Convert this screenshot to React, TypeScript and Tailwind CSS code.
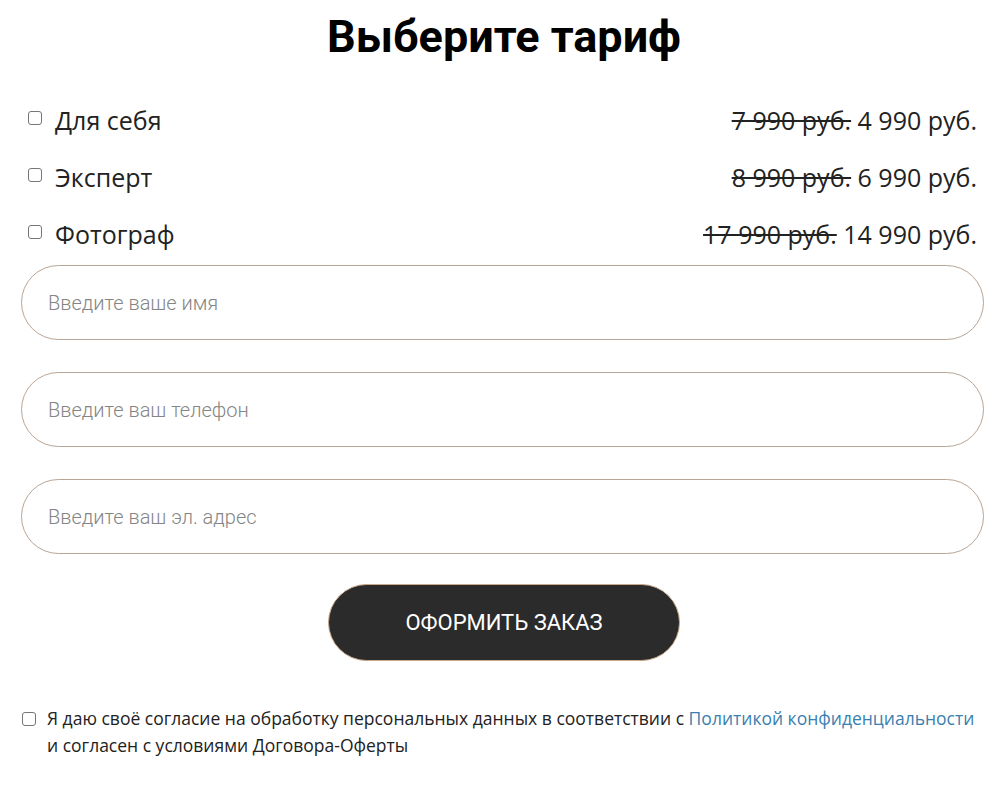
import React from "react";

const tariffs = [
  { name: "Для себя", old: "7 990 руб.", price: "4 990 руб." },
  { name: "Эксперт", old: "8 990 руб.", price: "6 990 руб." },
  { name: "Фотограф", old: "17 990 руб.", price: "14 990 руб." },
];

const placeholders = [
  "Введите ваше имя",
  "Введите ваш телефон",
  "Введите ваш эл. адрес",
];

export default function App() {
  return (
    <div className="w-[1008px] min-h-[785px] bg-white text-black">
      <h1
        className="pt-[10px] text-center text-[45px] font-bold leading-[54px] text-black"
        style={{ fontFamily: "Roboto, sans-serif" }}
      >
        Выберите тариф
      </h1>
      <div
        className="mt-[39px] flex flex-col pl-[28px] pr-[31px]"
        style={{ fontFamily: '"Open Sans", sans-serif' }}
      >
        {tariffs.map((t) => (
          <div key={t.name} className="flex h-[57px] items-start justify-between">
            <label className="flex items-center text-[25px] leading-[34px] text-[#222]">
              <span className="mr-[13px] inline-block h-[14px] w-[14px] -translate-y-[2px] rounded-[3px] border border-[#767676] bg-white" />
              {t.name}
            </label>
            <div className="text-[25px] leading-[34px] text-[#222]">
              <span className="line-through">{t.old}</span> {t.price}
            </div>
          </div>
        ))}
      </div>
      <div className="mt-[-9px] flex flex-col gap-[32px] pl-[21px] pr-[24px]">
        {placeholders.map((p) => (
          <div
            key={p}
            className="flex h-[75px] items-center rounded-full border border-[#b8a596] pl-[26px] text-[20px] font-light text-[#858585]"
            style={{ fontFamily: "Roboto, sans-serif" }}
          >
            {p}
          </div>
        ))}
      </div>
      <div className="mt-[30px] flex justify-center">
        <button
          className="flex h-[77px] w-[352px] items-center justify-center rounded-full border border-[#c9a98b] bg-[#2b2b2b] text-[22px] font-normal text-white"
          style={{ fontFamily: "Roboto, sans-serif" }}
        >
          ОФОРМИТЬ ЗАКАЗ
        </button>
      </div>
      <div
        className="mt-[44px] flex px-[22px] text-[17.5px] leading-[27px] text-[#222]"
        style={{ fontFamily: '"Open Sans", sans-serif' }}
      >
        <span className="mr-[11px] mt-[7px] inline-block h-[14px] w-[14px] shrink-0 rounded-[3px] border border-[#767676] bg-white" />
        <p className="w-[940px]">
          Я даю своё согласие на обработку персональных данных в соответствии с{" "}
          <span className="text-[#3a7fb0]">Политикой конфиденциальности</span>
          <br />
          и согласен с условиями Договора-Оферты
        </p>
      </div>
    </div>
  );
}
